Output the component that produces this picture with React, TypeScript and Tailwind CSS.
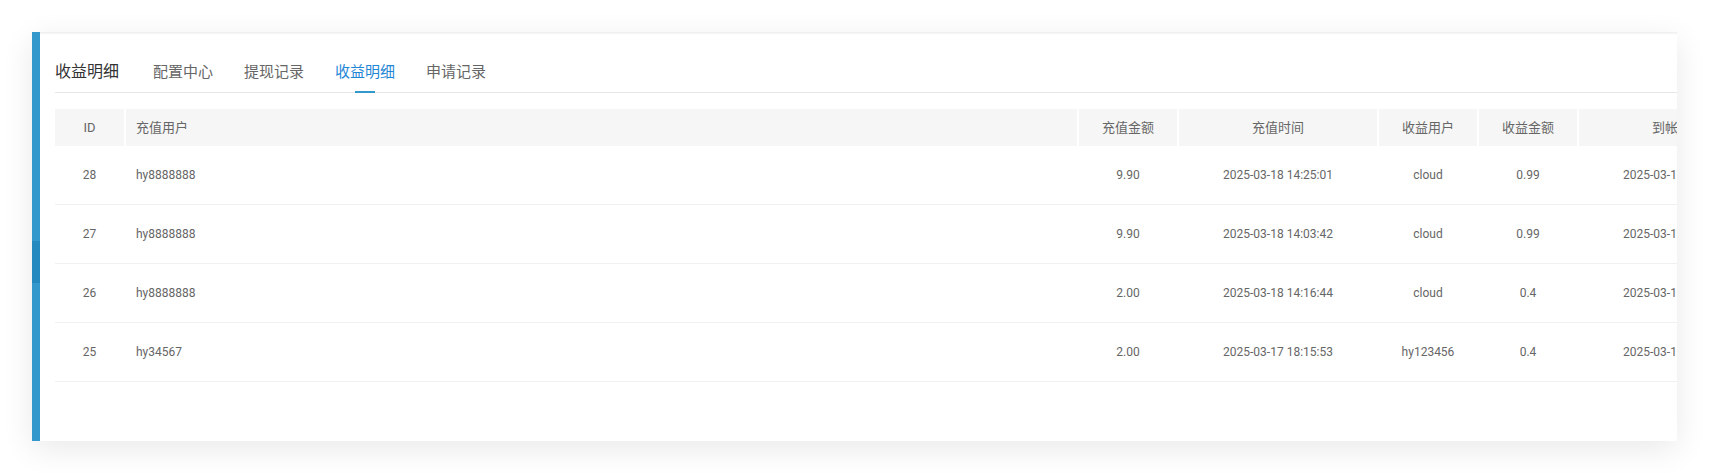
const tabs = ["配置中心", "提现记录", "收益明细", "申请记录"];
const activeTab = "收益明细";

const columns = [
  { key: "id", title: "ID", align: "center" },
  { key: "payUser", title: "充值用户", align: "left" },
  { key: "amount", title: "充值金额", align: "center" },
  { key: "payTime", title: "充值时间", align: "center" },
  { key: "earnUser", title: "收益用户", align: "center" },
  { key: "earnAmount", title: "收益金额", align: "center" },
  { key: "arriveTime", title: "到帐时间", align: "center" },
] as const;

interface Row {
  id: number;
  payUser: string;
  amount: string;
  payTime: string;
  earnUser: string;
  earnAmount: string;
  arriveTime: string;
}

const rows: Row[] = [
  { id: 28, payUser: "hy8888888", amount: "9.90", payTime: "2025-03-18 14:25:01", earnUser: "cloud", earnAmount: "0.99", arriveTime: "2025-03-18 14:25:01" },
  { id: 27, payUser: "hy8888888", amount: "9.90", payTime: "2025-03-18 14:03:42", earnUser: "cloud", earnAmount: "0.99", arriveTime: "2025-03-18 14:03:42" },
  { id: 26, payUser: "hy8888888", amount: "2.00", payTime: "2025-03-18 14:16:44", earnUser: "cloud", earnAmount: "0.4", arriveTime: "2025-03-18 14:16:44" },
  { id: 25, payUser: "hy34567", amount: "2.00", payTime: "2025-03-17 18:15:53", earnUser: "hy123456", earnAmount: "0.4", arriveTime: "2025-03-17 18:15:53" },
];

const gridCols = "grid grid-cols-[69px_951px_98px_198px_98px_98px_198px] gap-x-[2px] w-max";

export default function App() {
  return (
    <div className="min-h-screen bg-white p-8 font-[Roboto,'Noto_Sans_CJK_SC',sans-serif]">
      <div className="flex h-[409px] bg-white shadow-[0_8px_30px_rgba(0,0,0,0.09)]">
        {/* left accent bar */}
        <div className="flex w-2 shrink-0 flex-col">
          <div className="h-[209px] bg-[#3399cc]" />
          <div className="h-[42px] bg-[#2389be]" />
          <div className="flex-1 bg-[#3399cc]" />
        </div>

        <div className="min-w-0 flex-1 overflow-hidden">
          <div className="h-[3px] bg-gradient-to-b from-[#ededed] to-white" />
          <div className="pl-[15px] pt-[17px]">
            {/* Tabs */}
            <div className="flex h-[41px] items-center border-b border-[#e8e8e8]">
              <span className="mr-[34px] text-[16px] leading-[40px] text-[#333]">收益明细</span>
              <div className="flex h-full gap-[31px]">
                {tabs.map((tab) => (
                  <div
                    key={tab}
                    className={
                      tab === activeTab
                        ? "relative flex h-full items-center text-[15px] text-[#1f87d6]"
                        : "relative flex h-full items-center text-[15px] text-[#666]"
                    }
                  >
                    {tab}
                    {tab === activeTab && (
                      <span className="absolute bottom-[-1px] left-1/2 h-[2px] w-5 -translate-x-1/2 bg-[#3399cc]" />
                    )}
                  </div>
                ))}
              </div>
            </div>

            {/* Table */}
            <div className="mt-4">
              <div className={`${gridCols} h-[37px]`}>
                {columns.map((col) => (
                  <div
                    key={col.key}
                    className={
                      col.align === "left"
                        ? "flex items-center bg-[#f6f6f6] pl-[10px] text-[13px] text-[#666]"
                        : "flex items-center justify-center bg-[#f6f6f6] text-[13px] text-[#666]"
                    }
                  >
                    {col.title}
                  </div>
                ))}
              </div>
              {rows.map((row) => (
                <div key={row.id} className={`${gridCols} h-[59px] border-b border-[#f1f1f1]`}>
                  {columns.map((col) => (
                    <div
                      key={col.key}
                      className={
                        col.align === "left"
                          ? "flex items-center whitespace-nowrap pl-[10px] text-[12px] text-[#666]"
                          : "flex items-center justify-center whitespace-nowrap text-[12px] text-[#666]"
                      }
                    >
                      {row[col.key]}
                    </div>
                  ))}
                </div>
              ))}
            </div>
          </div>
        </div>
      </div>
    </div>
  );
}
